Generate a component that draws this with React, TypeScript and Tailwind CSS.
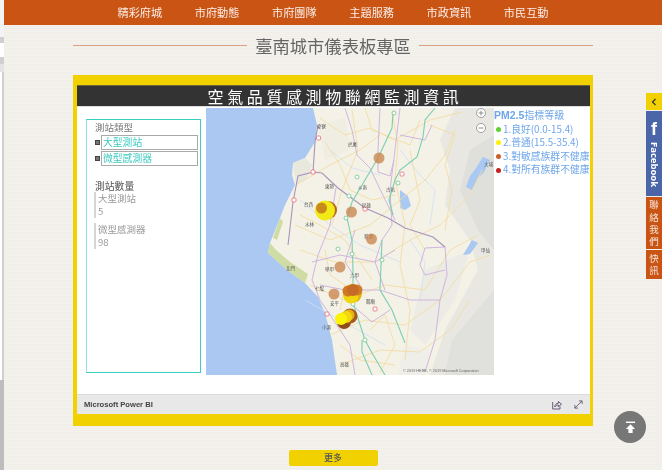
const cjk = "font-['Noto_Sans_CJK_TC','Noto_Sans',sans-serif]";

const navItems = ["精彩府城", "市府動態", "市府團隊", "主題服務", "市政資訊", "市民互動"];

const legend = [
  { label: "1.良好(0.0-15.4)", dot: "bg-[#5fd12f]" },
  { label: "2.普通(15.5-35.4)", dot: "bg-[#fff200]" },
  { label: "3.對敏感族群不健康", dot: "bg-[#c8622a]" },
  { label: "4.對所有族群不健康", dot: "bg-[#c4201f]" },
];

const mapLabels = [
  { x: 317, y: 128, t: "麥寮" },
  { x: 348, y: 146, t: "虎尾" },
  { x: 325, y: 188, t: "東勢" },
  { x: 358, y: 189, t: "斗南" },
  { x: 386, y: 191, t: "古坑" },
  { x: 304, y: 206, t: "台西" },
  { x: 305, y: 226, t: "水林" },
  { x: 362, y: 207, t: "民雄" },
  { x: 364, y: 238, t: "新港" },
  { x: 325, y: 271, t: "學甲" },
  { x: 350, y: 277, t: "六甲" },
  { x: 315, y: 290, t: "七股" },
  { x: 330, y: 305, t: "安平" },
  { x: 366, y: 303, t: "關廟" },
  { x: 322, y: 329, t: "小港" },
  { x: 340, y: 366, t: "高雄" },
  { x: 286, y: 270, t: "北門" },
  { x: 484, y: 166, t: "大埔" },
  { x: 481, y: 252, t: "甲仙" },
];

function MapDrawing() {
  return (
    <svg viewBox="206 108 288 267" className="w-full h-full block">
      <rect x="206" y="108" width="288" height="267" fill="#f4f1e6" />
      {/* hills */}
      <path d="M455 108 L494 108 L494 375 L430 375 L445 330 L478 270 L470 240 L445 205 L450 170 L440 140 Z" fill="#e8e7e2" />
      <path d="M470 150 L494 135 L494 250 L478 230 L460 190 Z" fill="#dfdfdb" />
      <path d="M425 270 L470 250 L455 300 L425 345 L410 330 Z" fill="#ecebe5" />
      <path d="M452 340 L494 290 L494 375 L445 375 Z" fill="#e0e0dc" />
      <path d="M405 345 L430 350 L425 375 L398 375 Z" fill="#efeee8" />
      {/* sea */}
      <path
        d="M206 108 L313 108 L317 125 L315 142 L305 158 L293 163 L292 175 L295 185 L285 205 L280 218 L270 243 L268 253 L287 270 L305 283 L318 297 L325 313 L332 340 L337 375 L206 375 Z"
        fill="#aac8f2"
      />
      <path d="M270 243 L268 253 L287 270 L305 283 L308 274 L290 262 L276 250 Z" fill="#cfdca4" />
      <path d="M280 218 L273 238 L277 240 L283 222 Z" fill="#cfdca4" />
      <path d="M293 163 L305 158 L312 165 L306 180 L296 184 Z" fill="#e9e8dc" />
      <path d="M318 125 L345 118 L350 150 L325 160 Z" fill="#f0eee2" />
      {/* rivers and lakes */}
      <path d="M483 157 L490 160 L484 172 L478 178 L472 190 L466 187 L470 176 L476 168 Z" fill="#a9c9f2" />
      <path d="M400 190 L408 196 L411 206 L405 210 L400 208 Z" fill="#a9c9f2" />
      <path d="M472 240 L478 243 L470 254 L463 255 Z" fill="#a9c9f2" />
      <g fill="none" stroke="#cfe0f5" strokeWidth="0.8">
        <path d="M400 150 L420 175 L435 190 L430 225" />
        <path d="M300 200 L330 225 L360 245 L400 262" />
        <path d="M305 300 L340 320 L385 345" />
        <path d="M410 240 L425 262 L420 300" />
        <path d="M330 150 L352 168 L380 175" />
      </g>
      {/* yellow roads */}
      <g fill="none" stroke="#f3dca4" strokeWidth="0.9">
        <path d="M320 118 L345 135 L370 128 L395 140 L430 120 L462 112" />
        <path d="M296 185 L330 165 L360 150 L380 135" />
        <path d="M295 225 L330 240 L370 225 L400 200 L425 180 L445 155 L455 130" />
        <path d="M300 250 L335 262 L375 262 L410 240 L440 225 L470 195 L482 170" />
        <path d="M310 285 L345 300 L385 285 L425 290 L450 250 L478 235" />
        <path d="M330 335 L365 320 L405 325 L440 300 L470 262 L490 255" />
        <path d="M340 365 L380 350 L420 352 L450 330 L470 300" />
        <path d="M392 112 L398 145 L395 180 L405 225 L400 265 L410 310 L405 360" />
        <path d="M352 110 L358 150 L342 190 L332 225" />
        <path d="M430 125 L455 135 L445 165 L452 190 L445 230" />
        <path d="M325 142 L340 165 L350 190 L372 200 L395 195" />
        <path d="M300 215 L320 225 L345 240 L360 262 L372 280" />
        <path d="M325 250 L330 275 L345 285 L340 310" />
        <path d="M365 108 L372 130 L410 145 L420 120" />
        <path d="M410 150 L420 200 L410 225 L425 250" />
        <path d="M370 330 L385 315 L395 345 L380 372" />
        <path d="M340 345 L360 360 L395 365" />
      </g>
      {/* purple roads */}
      <g fill="none" stroke="#cfb6e0" strokeWidth="1">
        <path d="M345 108 L352 130 L357 155 L370 168 L378 185 L395 220" />
        <path d="M380 108 L378 150 L378 172 L390 176 L394 160" />
        <path d="M400 108 L395 150 L390 190 L392 225 L382 240 L375 262 L385 290" />
        <path d="M336 188 L330 225 L318 255 L312 280 L320 300 L350 345 L355 375" />
        <path d="M355 230 L345 262 L360 285 L352 305 L372 322 L390 310" />
        <path d="M312 262 L340 255 L375 262 L395 250" />
        <path d="M320 285 L345 290 L380 290 L410 300 L440 300" />
        <path d="M425 248 L445 247 L447 275 L440 300 L435 340 L425 372" />
        <path d="M425 248 L420 265 L425 275 L445 270" />
        <path d="M400 135 L425 140 L432 125" />
      </g>
      {/* slate freeway */}
      <g fill="none" stroke="#a695bb" strokeWidth="1.1">
        <path d="M318 125 L315 142 L313 172 L298 176 L293 202 L288 245" />
        <path d="M313 172 L322 173 L338 188 L365 208 L388 218 L405 228 L433 237 L445 247" />
      </g>
      {/* teal freeway */}
      <g fill="none" stroke="#7bcfb0" strokeWidth="1.1">
        <path d="M393 112 L392 128 L378 158 L365 180 L352 202 L347 218 L352 240 L353 270 L353 303 L365 340 L372 353 L385 375" />
        <path d="M382 240 L381 265 L380 290 L392 310 L405 343" />
        <path d="M435 108 L425 120 L423 137 L417 157 L400 170 L395 180 L389 200 L393 215" />
        <path d="M362 340 L362 352 L372 375" />
      </g>
      {/* shields */}
      <g fill="#fff" stroke="#ea6a7a" strokeWidth="0.8">
        <rect x="316.5" y="136" width="4" height="4" rx="1" />
        <rect x="311" y="170" width="4" height="4" rx="1" />
        <rect x="292" y="198" width="4" height="4" rx="1" />
        <rect x="363" y="207" width="4" height="4" rx="1" />
        <rect x="325" y="312" width="4" height="4" rx="1" />
        <rect x="373" y="307" width="4" height="4" rx="1" />
        <rect x="400" y="172" width="4" height="4" rx="1" />
      </g>
      <g fill="#fff" stroke="#70c48f" strokeWidth="0.8">
        <circle cx="394" cy="113" r="2" />
        <circle cx="357" cy="177" r="2" />
        <circle cx="349" cy="196" r="2" />
        <circle cx="346" cy="218" r="2" />
        <circle cx="398" cy="183" r="2" />
        <circle cx="338" cy="249" r="2" />
        <circle cx="352" cy="254" r="2" />
        <circle cx="382" cy="260" r="2" />
        <circle cx="353" cy="304" r="2" />
        <circle cx="365" cy="340" r="2" />
      </g>
      {mapLabels.map((l) => (
        <text key={l.x + l.t} x={l.x} y={l.y} fontSize="4.5" fill="#555" fontFamily="Noto Sans CJK TC, sans-serif">
          {l.t}
        </text>
      ))}
      {/* monitoring stations */}
      <g fill="#c9854e" fillOpacity="0.78">
        <circle cx="379" cy="158" r="5.5" />
        <circle cx="351.5" cy="212" r="5.5" />
        <circle cx="371.5" cy="239" r="5.5" />
        <circle cx="340" cy="267" r="5.5" />
        <circle cx="334" cy="294" r="5.5" />
      </g>
      <circle cx="328" cy="210" r="9" fill="#b3661f" />
      <circle cx="325" cy="210.5" r="10" fill="#f2ea14" />
      <circle cx="321.5" cy="208" r="5.5" fill="#c98a1c" />
      <circle cx="352.5" cy="293.5" r="9.5" fill="#e3b512" />
      <circle cx="351" cy="296" r="7.5" fill="#f0d60f" />
      <circle cx="348" cy="291" r="5.5" fill="#d0781f" />
      <circle cx="357" cy="290" r="5.5" fill="#d08024" />
      <circle cx="353" cy="290" r="6" fill="#c56a27" />
      <circle cx="344" cy="322" r="7" fill="#8f4c1d" />
      <circle cx="350" cy="316" r="7.5" fill="#a8591d" />
      <circle cx="349" cy="315" r="5.5" fill="#e2b415" />
      <circle cx="346" cy="317" r="6" fill="#f2d90f" />
      <circle cx="341" cy="319" r="6" fill="#fbf308" />
      {/* zoom buttons */}
      <g fill="#fff" stroke="#8a8a8a" strokeWidth="0.8">
        <circle cx="481" cy="113" r="4.5" />
        <circle cx="481" cy="128" r="4.5" />
      </g>
      <path d="M478.5 113 H483.5 M481 110.5 V115.5 M478.5 128 H483.5" stroke="#777" strokeWidth="0.8" />
      <text x="403" y="372" fontSize="3.8" fill="#666" fontFamily="Liberation Sans, sans-serif">
        © 2019 HERE, © 2019 Microsoft Corporation
      </text>
    </svg>
  );
}

function KpiCard({ label, value }: { label: string; value: string }) {
  return (
    <div className="border-l-2 border-[#d5d5d5] pl-[2px] h-[26px] text-[9.5px] leading-[13px] text-[#999]">
      <div>{label}</div>
      <div>{value}</div>
    </div>
  );
}

function SlicerRow({ label }: { label: string }) {
  return (
    <div className="flex items-center">
      <span className="w-[3px] h-[3px] mr-[1px] outline outline-1 outline-[#444] bg-[#777]" />
      <div className="ml-[1px] w-[97px] h-[15px] border border-[#aaa] pl-[1px] text-[9.8px] leading-[13px] text-[#3ccabf]">
        {label}
      </div>
    </div>
  );
}

function ReportPanel() {
  return (
    <div className="flex-1 flex flex-col min-h-0">
      <div className="h-[21px] shrink-0 bg-[#333333] border-t border-[#6b6436] flex items-center justify-center text-white text-[16px] tracking-[3.6px] pl-[3px]">
        空氣品質感測物聯網監測資訊
      </div>
      <div className="flex-1 bg-white flex min-h-0 border-t border-[#ddd]">
        {/* slicer panel */}
        <div className="ml-[9px] mt-[12px] w-[115px] h-[254px] shrink-0 border border-[#37cfc4] border-l-[#8fe0da] pl-[8px] pt-[1px] text-[#777]">
          <div className="text-[9.5px] leading-[13px]">測站類型</div>
          <div className="flex flex-col gap-[1px] ml-[1px] mt-[1px]">
            <SlicerRow label="大型測站" />
            <SlicerRow label="微型感測器" />
          </div>
          <div className="mt-[14px] text-[9.8px] leading-[12px] text-[#555]">測站數量</div>
          <div className="flex flex-col gap-[5px] -ml-[1px]">
            <KpiCard label="大型測站" value="5" />
            <KpiCard label="微型感測器" value="98" />
          </div>
        </div>
        {/* map */}
        <div className="ml-[5px] mt-[1px] w-[288px] h-[267px] shrink-0">
          <MapDrawing />
        </div>
        {/* legend */}
        <div className="flex-1 min-w-0 pt-[1px] text-[#6ea6ea] text-[9.8px] leading-[13.6px] whitespace-nowrap">
          <div>
            <span className="font-bold text-[10.5px] font-['Liberation_Sans',sans-serif]">PM2.5</span>
            <span className="text-[10px]">指標等級</span>
          </div>
          {legend.map((item) => (
            <div key={item.label} className="flex items-center pl-[1px]">
              <span className={`w-[5px] h-[5px] rounded-full mr-[2px] ml-[1px] shrink-0 ${item.dot}`} />
              {item.label}
            </div>
          ))}
        </div>
      </div>
      <div className="h-[20px] shrink-0 bg-[#e8e8e8] border-t border-[#dcdcdc] flex items-center justify-between pl-[7px] pr-[7px]">
        <span className="text-[7.6px] font-bold text-[#444] font-['Liberation_Sans',sans-serif]">Microsoft Power BI</span>
        <div className="flex items-center gap-[12px]">
          <svg viewBox="0 0 10 10" className="w-[10px] h-[10px]" fill="none" stroke="#5c4a6a" strokeWidth="0.9">
            <path d="M0.7 2 V9 H8 V6.5" />
            <path d="M2.8 7 C3 4.5 4.5 3.3 6.3 3.3 V1.5 L9.5 4.2 L6.3 6.8 V5 C5 5 3.8 5.5 2.8 7 Z" />
          </svg>
          <svg viewBox="0 0 10 10" className="w-[9px] h-[9px]" fill="none" stroke="#5c4a6a" strokeWidth="0.9">
            <path d="M1 9 L9 1 M5.5 1 H9 V4.5 M1 5.5 V9 H4.5" />
          </svg>
        </div>
      </div>
    </div>
  );
}

export default function App() {
  return (
    <div className={`relative w-[662px] h-[470px] overflow-hidden flex blur-[0.3px] bg-[#f2efea] bg-[repeating-linear-gradient(0deg,#f4f2ed_0px,#f4f2ed_1px,#f1eee9_1px,#f1eee9_2px)] ${cjk}`}>
      {/* browser edge */}
      <div className="w-[4px] shrink-0 flex flex-col bg-[#bdbdbd]">
        <div className="h-[37px] bg-[#f4f4f4]" />
        <div className="h-[6px] bg-[#cfcfcf]" />
        <div className="h-[14px] bg-white" />
        <div className="h-[7px] bg-[#cfcfcf]" />
        <div className="h-[8px] bg-[#e4e4e4]" />
        <div className="flex-1 border-l-2 border-white bg-[#d0d0d0]" />
        <div className="h-[90px] bg-[#bdbdbd]" />
      </div>

      <div className="flex-1 min-w-0 flex flex-col">
        <nav className="h-[25px] shrink-0 bg-[#c95413] flex items-start justify-center gap-[32.5px] pt-[4px] text-white/90 text-[11.2px] leading-[16px]">
          {navItems.map((n) => (
            <span key={n}>{n}</span>
          ))}
        </nav>

        <div className="mx-[69px] mt-[8px] h-[25px] shrink-0 flex items-center gap-[8px]">
          <div className="flex-1 h-px bg-[#d9a283]" />
          <h1 className="text-[17.3px] leading-[25px] text-[#666] font-normal">臺南城市儀表板專區</h1>
          <div className="flex-1 h-px bg-[#d9a283]" />
        </div>

        <div className="mx-[69px] mt-[17px] h-[351px] shrink-0 bg-[#f2d100] pt-[10px] pb-[12px] pl-[4px] pr-[3px] flex flex-col">
          <ReportPanel />
        </div>

        <div className="mt-[24px] flex justify-center">
          <a className="w-[89px] h-[16px] bg-[#f2d100] rounded-[2px] flex items-center justify-center text-[9px] text-[#555] font-medium">
            更多
          </a>
        </div>
      </div>

      {/* side tabs */}
      <div className="absolute right-0 top-[93px] w-[16px] flex flex-col gap-px text-white/85">
        <div className="h-[17px] bg-[#f2d100] flex items-center justify-center">
          <svg viewBox="0 0 8 10" className="w-[6px] h-[8px]" fill="none" stroke="#333" strokeWidth="1.6">
            <path d="M6 1 L2 5 L6 9" />
          </svg>
        </div>
        <div className="h-[85px] bg-[#4b66a8] flex flex-col items-center text-white pt-[8px]">
          <span className="font-bold text-[18px] leading-[20px] font-['Liberation_Sans',sans-serif]">f</span>
          <span className="mt-[3px] text-[9.5px] leading-[16px] font-bold [writing-mode:vertical-rl] font-['Open_Sans',sans-serif]">
            Facebook
          </span>
        </div>
        <div className="h-[52px] bg-[#c95413] flex flex-col items-center justify-center text-[9.5px] leading-[12.4px]">
          <span>聯</span>
          <span>絡</span>
          <span>我</span>
          <span>們</span>
        </div>
        <div className="h-[29px] bg-[#c95413] flex flex-col items-center justify-center text-[9.5px] leading-[11.5px]">
          <span>快</span>
          <span>訊</span>
        </div>
      </div>

      {/* back to top */}
      <div className="absolute left-[614px] top-[411px] w-[32px] h-[32px] rounded-full bg-[#777777] flex items-center justify-center">
        <svg viewBox="0 0 12 14" className="w-[11px] h-[13px]" fill="#fff">
          <rect x="1" y="0.5" width="10" height="1.6" />
          <path d="M6 3.5 L11 8.5 H8.3 V13 H3.7 V8.5 H1 Z" />
        </svg>
      </div>
    </div>
  );
}
